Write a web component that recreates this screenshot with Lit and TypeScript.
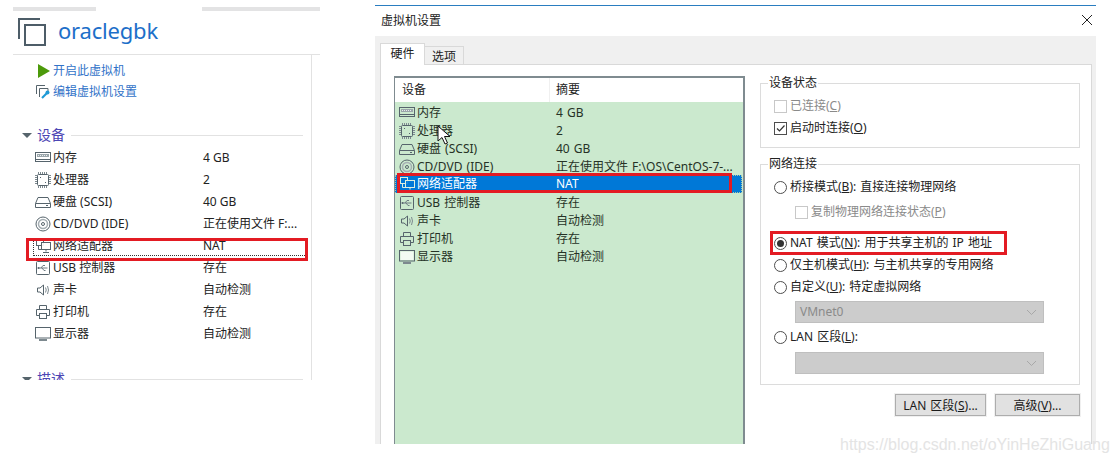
import { LitElement, html, css, svg } from "lit";
import { customElement } from "lit/decorators.js";

const stroke = "#56646c";
const icons: Record<string, unknown> = {
  mem: svg`<rect x="0.5" y="2.5" width="15" height="9" fill="none" stroke="${stroke}"/><rect x="2" y="4" width="12" height="3" fill="#9aa5aa"/><path d="M3 5.5h10" stroke="#e8ecee" stroke-dasharray="1 1"/><path d="M0.5 9.5h15" stroke="${stroke}"/><path d="M6 11.5h4" stroke="${stroke}"/>`,
  cpu: svg`<rect x="2.5" y="2.5" width="11" height="11" rx="1" fill="none" stroke="${stroke}"/><path d="M3.5 0v2M5.5 0v2M7.5 0v2M9.5 0v2M11.5 0v2M3.5 14v2M5.5 14v2M7.5 14v2M9.5 14v2M11.5 14v2M0 3.500h2M0 5.500h2M0 7.500h2M0 9.500h2M0 11.500h2M14 3.500h2M14 5.500h2M14 7.500h2M14 9.500h2M14 11.500h2" stroke="#7d898f"/><rect x="5" y="5" width="1" height="1" fill="${stroke}"/><rect x="10" y="10" width="1" height="1" fill="${stroke}"/>`,
  disk: svg`<path d="M.5 9.5 3 3.5h10l2.5 6v4h-15z" fill="none" stroke="${stroke}"/><path d="M.5 9.5h15" stroke="${stroke}"/><path d="M11 11.5h2" stroke="${stroke}"/>`,
  cd: svg`<circle cx="8" cy="8" r="7" fill="none" stroke="${stroke}"/><circle cx="8" cy="8" r="4.5" fill="none" stroke="#a5aeb3" stroke-width="1.5"/><circle cx="8" cy="8" r="1.5" fill="none" stroke="${stroke}"/>`,
  net: svg`<rect x="1.5" y="1.5" width="7" height="6" fill="none" stroke="${stroke}"/><rect x="6.5" y="4.5" width="9" height="7" fill="#fff" fill-opacity="0.9" stroke="${stroke}"/><path d="M11 11.5v2M8 14.5h6M3.5 7.5v4h3" fill="none" stroke="${stroke}"/>`,
  usb: svg`<rect x="1.5" y="1.5" width="13" height="13" rx="1" fill="none" stroke="${stroke}"/><path d="M3.5 8h9M6 8l2-2.500h2M7 8l2 2.500h1.500" fill="none" stroke="#6e7b82"/><circle cx="3.500" cy="8" r="1" fill="${stroke}"/>`,
  sound: svg`<path d="M2.500 6h2.500l3.500-3v10L5 10H2.500z" fill="none" stroke="${stroke}"/><path d="M10.500 5.500q1.500 2.500 0 5M12.500 4q2 4 0 8" fill="none" stroke="#7d898f"/>`,
  print: svg`<path d="M4.500 5.500v-4h7v4M4.500 11.500h-3v-6h13v6h-3" fill="none" stroke="${stroke}"/><rect x="4.500" y="9.500" width="7" height="5" fill="none" stroke="${stroke}"/>`,
  display: svg`<rect x="0.500" y="1.500" width="15" height="10.500" fill="none" stroke="${stroke}"/><rect x="1.500" y="2.500" width="13" height="8.500" fill="#fff" fill-opacity="0.75"/><path d="M4 14h8" stroke="#7d898f" stroke-width="2"/>`,
};

const icon = (name: string) => html`<svg class="ico" viewBox="0 0 16 16" width="16" height="16">${icons[name]}</svg>`;

interface Dev { ico: string; name: string; left: string; right: string; sel?: boolean }
const devices: Dev[] = [
  { ico: "mem", name: "内存", left: "4 GB", right: "4 GB" },
  { ico: "cpu", name: "处理器", left: "2", right: "2" },
  { ico: "disk", name: "硬盘 (SCSI)", left: "40 GB", right: "40 GB" },
  { ico: "cd", name: "CD/DVD (IDE)", left: "正在使用文件 F:...", right: "正在使用文件 F:\\OS\\CentOS-7-..." },
  { ico: "net", name: "网络适配器", left: "NAT", right: "NAT", sel: true },
  { ico: "usb", name: "USB 控制器", left: "存在", right: "存在" },
  { ico: "sound", name: "声卡", left: "自动检测", right: "自动检测" },
  { ico: "print", name: "打印机", left: "存在", right: "存在" },
  { ico: "display", name: "显示器", left: "自动检测", right: "自动检测" },
];

@customElement("app-root")
export class AppRoot extends LitElement {
  static styles = css`
    :host {
      display: block; width: 1117px; height: 463px; overflow: hidden; position: relative; background: #fff;
      font-family: "Noto Sans", "Noto Sans CJK SC", sans-serif; font-size: 12px; line-height: 16px; color: #222;
    }
    .page { display: flex; align-items: flex-start; height: 463px; }
    .ico { flex: none; display: block; }

    /* left */
    .left { height: 380px; overflow: hidden; margin-left: 13px; margin-right: 55px; flex: none; width: 307px; }
    .strips { display: flex; height: 4px; margin-top: 7px; }
    .strip1 { width: 83px; background: #e3e3e4; }
    .strip2 { width: 118px; margin-left: 106px; background: #e3e3e4; }
    .head { display: flex; align-items: flex-start; height: 36px; padding: 7px 0 0 5px; border-bottom: 1px solid #e2e2e2; gap: 12px; }
    .title { font-size: 22px; line-height: 30px; color: #1d6fc9; letter-spacing: -0.2px; margin-top: -3px; }
    .lbody { width: 298px; height: 325px; border-right: 1px solid #e2e2e2; box-sizing: content-box; }
    .acts { padding: 7px 0 0 24px; display: flex; flex-direction: column; gap: 4px; color: #3273c8; }
    .act { display: flex; align-items: center; gap: 2px; height: 17px; }
    .sec { display: flex; align-items: center; padding-left: 9px; gap: 5px; height: 20px; color: #4b46b4; font-size: 14px; width: 281px; }
    .sec .line { flex: 1; height: 1px; background: #e2e2e2; margin-left: 1px; }
    .tri { width: 0; height: 0; border: 5px solid transparent; border-top: 5px solid #56646c; border-bottom: 0; }
    .s1 { margin-top: 25px; }
    .s2 { margin-top: 24px; }
    .lrows { margin-top: 2px; padding-left: 22px; }
    .lrow { display: grid; grid-template-columns: 168px 1fr; height: 22px; align-items: center; position: relative; }
    .ncell { display: flex; align-items: center; gap: 2px; white-space: nowrap; }
    .lrow.sel::before { content: ""; position: absolute; left: -2px; right: 6px; top: 3px; bottom: 1px; border: dotted #333; border-width: 0 0 1px 1px; }
    .redl { position: absolute; left: -9px; top: 3px; width: 276px; height: 17px; border: 3px solid #e31b23; }

    /* dialog */
    .dialog { width: 721px; height: 439px; margin-top: 5px; flex: none; border-top: 1px solid #2a7dc0; display: flex; flex-direction: column; box-sizing: border-box; word-spacing: 1px; }
    .dtitle { height: 30px; flex: none; display: flex; align-items: center; justify-content: space-between; padding: 0 3px 0 6px; }
    .close { width: 12px; height: 12px; margin-top: -2px; }
    .dmain { flex: 1; background: #f0f0f0; padding: 0 4px 0 5px; display: flex; flex-direction: column; min-height: 0; }
    .tabs { display: flex; align-items: flex-end; height: 29px; flex: none; padding-top: 7px; box-sizing: border-box; position: relative; z-index: 1; margin-bottom: -1px; }
    .tab { border: 1px solid #d9d9d9; box-sizing: border-box; text-align: center; }
    .tab.on { width: 45px; height: 22px; background: #fff; border-bottom: 0; line-height: 20px; }
    .tab.off { width: 39px; height: 19px; border-left: 0; background: #f0f0f0; line-height: 20px; }
    .panel { flex: 1; background: #fff; border: 1px solid #d9d9d9; border-bottom: 0; display: flex; min-height: 0; padding-left: 13px; }
    .list { width: 351px; border: solid #7f8b90; border-width: 2px 2px 0 1px; box-sizing: border-box; margin-top: 11px; background: #cbe9ce; flex: none; }
    .lhead { display: grid; grid-template-columns: 154px 1fr; height: 24px; background: #fff; align-items: center; }
    .lhead span { padding-left: 7px; height: 24px; line-height: 24px; }
    .lhead span + span { border-left: 1px solid #f0f0f0; padding-left: 6px; }
    .rows { padding-top: 2px; }
    .row { display: grid; grid-template-columns: 157px 1fr; height: 18px; align-items: center; padding-left: 4px; position: relative; color: #263226; }
    .row:nth-child(4) { height: 17px; }
    .row:nth-child(6) { height: 19px; }
    .row.sel { background: #0078d7; color: #fff; margin-right: 1px; outline: 1px dotted #a8c8a8; outline-offset: -1px; }
    .row.sel .ico rect { fill: #0078d7; stroke: #dcefe0; }
    .row.sel .ico path { stroke: #dcefe0; }
    .redr { position: absolute; left: 2px; top: -2px; width: 329px; height: 14px; border: 3px solid #e31b23; }

    .side { width: 320px; margin-left: 15px; flex: none; padding-top: 10px; }
    fieldset { margin: 0; padding: 4px 0 0 13px; border: 1px solid #dcdcdc; box-sizing: border-box; min-width: 0; display: block; }
    legend { padding: 0 1px; margin-left: -6px; line-height: 16px; }
    .f1 { height: 73px; }
    .f2 { height: 229px; margin-top: 8px; }
    .opt { display: flex; align-items: center; gap: 3px; height: 22px; white-space: nowrap; position: relative; }
    .dis { color: #8a8a8a; }
    .box { width: 11px; height: 11px; border: 1px solid #4e4e4e; flex: none; background: #fff; display: flex; }
    .box.d { border-color: #c8c8c8; }
    .radio { width: 11px; height: 11px; border: 1px solid #4e4e4e; border-radius: 50%; flex: none; display: flex; align-items: center; justify-content: center; background: #fff; }
    .radio i { width: 7px; height: 7px; background: #333; border-radius: 50%; display: block; }
    .sub { padding-left: 21px; height: 28px; }
    .gap-n { margin-top: 6px; }
    .gap-s { margin-top: 3px; }
    .gap-m { margin-top: 4px; }
    .redn { position: absolute; left: -4px; top: -1px; width: 231px; height: 18px; border: 3px solid #e31b23; }
    .sel-box { margin-left: 21px; width: 249px; height: 22px; background: #ccc; border: 1px solid #bfbfbf; box-sizing: border-box; display: flex; align-items: center; justify-content: space-between; padding: 0 6px 0 4px; color: #8a8a8a; }
    .btns { display: flex; justify-content: flex-end; gap: 9px; margin-top: 9px; }
    .btn { height: 22px; border: 1px solid #adadad; outline: 1px solid #f0f0f0; background: #e1e1e1; box-sizing: border-box; text-align: center; line-height: 21px; color: #1b1b1b; }
    .b1 { width: 91px; }
    .b2 { width: 85px; }
    .cursor { position: absolute; left: 437px; top: 125px; }
    .mark { position: absolute; left: 840px; top: 436px; font: 16px/18px "Liberation Sans", sans-serif; color: #e4e4e4; white-space: nowrap; word-spacing: 0; }
  `;

  private chev(c = "#a8a8a8") {
    return html`<svg width="11" height="7" viewBox="0 0 11 7"><path d="M1 1l4.500 4.500L10 1" fill="none" stroke="${c}"/></svg>`;
  }

  render() {
    return html`
      <div class="page">
        <section class="left">
          <div class="strips"><div class="strip1"></div><div class="strip2"></div></div>
          <div class="head">
            <svg width="28" height="28" viewBox="0 0 28 28"><path d="M1 21V1h21" fill="none" stroke="#4d5d68" stroke-width="2"/><rect x="7" y="7" width="20" height="20" fill="#fff" stroke="#4d5d68" stroke-width="2"/></svg>
            <span class="title">oraclegbk</span>
          </div>
          <div class="lbody">
            <div class="acts">
              <div class="act"><svg class="ico" width="14" height="14" viewBox="0 0 14 14"><path d="M1 0l12 7L1 14z" fill="#4c9a0a"/></svg><span>开启此虚拟机</span></div>
              <div class="act"><svg class="ico" width="16" height="16" viewBox="0 0 16 16" style="margin-left:-2px"><path d="M1.500 10V1.500H10" fill="none" stroke="#56646c"/><path d="M4.500 13V4.500H13V8" fill="none" stroke="#56646c"/><path d="M7 14l5-5" stroke="#1e9ad6" stroke-width="2.200"/><circle cx="12.500" cy="8.500" r="2" fill="#1e9ad6"/></svg><span>编辑虚拟机设置</span></div>
            </div>
            <div class="sec s1"><span class="tri"></span><span>设备</span><span class="line"></span></div>
            <div class="lrows">
              ${devices.map((d) => html`<div class="lrow ${d.sel ? "sel" : ""}">
                <div class="ncell">${icon(d.ico)}<span>${d.name}</span></div><span>${d.left}</span>
                ${d.sel ? html`<div class="redl"></div>` : ""}
              </div>`)}
            </div>
            <div class="sec s2"><span class="tri"></span><span>描述</span><span class="line"></span></div>
          </div>
        </section>

        <section class="dialog">
          <div class="dtitle"><span>虚拟机设置</span>
            <svg class="close" viewBox="0 0 12 12"><path d="M1 1l10 10M11 1L1 11" stroke="#222" fill="none"/></svg>
          </div>
          <div class="dmain">
            <div class="tabs"><div class="tab on">硬件</div><div class="tab off">选项</div></div>
            <div class="panel">
              <div class="list">
                <div class="lhead"><span>设备</span><span>摘要</span></div>
                <div class="rows">
                  ${devices.map((d) => html`<div class="row ${d.sel ? "sel" : ""}">
                    <div class="ncell">${icon(d.ico)}<span>${d.name}</span></div><span>${d.right}</span>
                    ${d.sel ? html`<div class="redr"></div>` : ""}
                  </div>`)}
                </div>
              </div>
              <div class="side">
                <fieldset class="f1">
                  <legend>设备状态</legend>
                  <div class="opt dis"><span class="box d"></span><span>已连接(<u>C</u>)</span></div>
                  <div class="opt"><span class="box"><svg width="11" height="11" viewBox="0 0 11 11"><path d="M2 5.500l2.500 2.500L9.500 2.500" fill="none" stroke="#333" stroke-width="1.200"/></svg></span><span>启动时连接(<u>O</u>)</span></div>
                </fieldset>
                <fieldset class="f2">
                  <legend>网络连接</legend>
                  <div class="opt"><span class="radio"></span><span>桥接模式(<u>B</u>): 直接连接物理网络</span></div>
                  <div class="opt dis sub"><span class="box d"></span><span>复制物理网络连接状态(<u>P</u>)</span></div>
                  <div class="opt gap-n"><span class="radio"><i></i></span><span>NAT 模式(<u>N</u>): 用于共享主机的 IP 地址</span><div class="redn"></div></div>
                  <div class="opt"><span class="radio"></span><span>仅主机模式(<u>H</u>): 与主机共享的专用网络</span></div>
                  <div class="opt"><span class="radio"></span><span>自定义(<u>U</u>): 特定虚拟网络</span></div>
                  <div class="sel-box gap-s"><span>VMnet0</span>${this.chev()}</div>
                  <div class="opt gap-s"><span class="radio"></span><span>LAN 区段(<u>L</u>):</span></div>
                  <div class="sel-box gap-m"><span></span>${this.chev()}</div>
                </fieldset>
                <div class="btns"><div class="btn b1">LAN 区段(<u>S</u>)...</div><div class="btn b2">高级(<u>V</u>)...</div></div>
              </div>
            </div>
          </div>
        </section>
      </div>
      <svg class="cursor" width="16" height="21" viewBox="0 0 16 21"><path d="M1 1v15l4-3.500 3 6.500 2.500-1-3-6.500H13z" fill="#fff" stroke="#111"/></svg>
      <div class="mark">https://blog.csdn.net/oYinHeZhiGuang</div>
    `;
  }
}
